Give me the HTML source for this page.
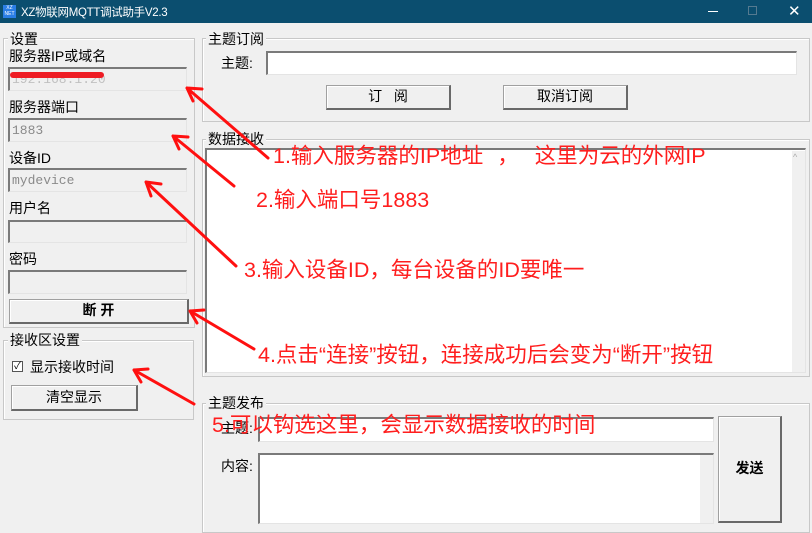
<!DOCTYPE html>
<html><head><meta charset="utf-8"><style>
*{box-sizing:border-box;margin:0;padding:0}
body{width:812px;height:531px;overflow:hidden;background:#f0f0f0;position:relative;font-family:"Liberation Sans","Noto Sans CJK SC",sans-serif;font-size:14px;color:#000}
.a{position:absolute}
.tb{left:0;top:0;width:812px;height:23px;background:#0b4e6f;color:#fff;font-size:12px}
.gb{position:absolute;border:1px solid #c8c8c8;box-shadow:inset 1px 1px 0 #fff}
.lg{position:absolute;background:#f0f0f0;padding:0 2px;font-size:14px;line-height:16px;color:#000}
.in{position:absolute;border-top:2px solid #7a7a7a;border-left:2px solid #7a7a7a;border-right:1px solid #e4e4e4;border-bottom:1px solid #e4e4e4;background:#f0f0f0;font-family:"Liberation Mono",monospace;font-size:13px;color:#8a8a8a;padding:3px 0 0 2px}
.w{background:#fff}
.bt{position:absolute;background:#f0f0f0;border:1px solid #a0a0a0;border-right:2px solid #696969;border-bottom:2px solid #696969;box-shadow:inset 1px 1px 0 #fff;text-align:center;font-size:14px}
.lb{position:absolute;font-size:14px;line-height:16px}
.r{position:absolute;color:#ff1e1e;font-size:21.5px;line-height:22px;white-space:nowrap}
</style></head><body>
<div class="a tb">
 <div class="a" style="left:3px;top:5px;width:13px;height:13px;background:#2a7ee6;color:#fff;font-size:5px;line-height:6px;text-align:center">XZ<br>NET</div>
 <div class="a" style="left:21px;top:4px;font-size:11.5px;letter-spacing:-0.3px">XZ物联网MQTT调试助手V2.3</div>
 <div class="a" style="left:708px;top:11px;width:10px;height:1px;background:#fff"></div>
 <div class="a" style="left:748px;top:6px;width:9px;height:9px;border:1px solid #557a90"></div>
 <div class="a" style="left:788px;top:2px;font-size:15px;color:#fff">✕</div>
</div>

<div class="gb" style="left:3px;top:38px;width:192px;height:290px"></div>
<div class="lg" style="left:8px;top:31px">设置</div>
<div class="lb" style="left:9px;top:48px">服务器IP或域名</div>
<div class="in" style="left:8px;top:67px;width:179px;height:24px;color:#c0c0c0">192.168.1.20</div>
<div class="a" style="left:10px;top:72px;width:94px;height:6px;background:#ee1c24;border-radius:3px"></div>
<div class="lb" style="left:9px;top:99px">服务器端口</div>
<div class="in" style="left:8px;top:118px;width:179px;height:24px">1883</div>
<div class="lb" style="left:9px;top:150px">设备ID</div>
<div class="in" style="left:8px;top:168px;width:179px;height:24px">mydevice</div>
<div class="lb" style="left:9px;top:200px">用户名</div>
<div class="in" style="left:8px;top:220px;width:179px;height:23px"></div>
<div class="lb" style="left:9px;top:251px">密码</div>
<div class="in" style="left:8px;top:270px;width:179px;height:24px"></div>
<div class="bt" style="left:9px;top:299px;width:180px;height:25px;line-height:21px;font-weight:bold">断 开</div>

<div class="gb" style="left:3px;top:340px;width:191px;height:80px"></div>
<div class="lg" style="left:8px;top:332px">接收区设置</div>
<div class="a" style="left:12px;top:361px;width:11px;height:11px;border:1px solid #555;background:#fff;font-size:10px;line-height:9px;text-align:center">✓</div>
<div class="lb" style="left:30px;top:359px">显示接收时间</div>
<div class="bt" style="left:11px;top:385px;width:127px;height:26px;line-height:22px">清空显示</div>

<div class="gb" style="left:202px;top:38px;width:608px;height:84px"></div>
<div class="lg" style="left:206px;top:31px">主题订阅</div>
<div class="lb" style="left:221px;top:55px">主题:</div>
<div class="in w" style="left:266px;top:51px;width:531px;height:24px"></div>
<div class="bt" style="left:326px;top:85px;width:125px;height:25px;line-height:21px">订&nbsp;&nbsp;&nbsp;阅</div>
<div class="bt" style="left:503px;top:85px;width:125px;height:25px;line-height:21px">取消订阅</div>

<div class="gb" style="left:202px;top:139px;width:608px;height:238px"></div>
<div class="lg" style="left:206px;top:131px">数据接收</div>
<div class="in w" style="left:205px;top:148px;width:601px;height:225px"></div>
<div class="a" style="left:792px;top:151px;width:13px;height:221px;background:#f0f0f0"></div>
<div class="a" style="left:793px;top:152px;font-size:9px;color:#aaa">^</div>

<div class="gb" style="left:202px;top:403px;width:608px;height:130px"></div>
<div class="lg" style="left:206px;top:395px">主题发布</div>
<div class="lb" style="left:221px;top:420px">主题:</div>
<div class="in w" style="left:258px;top:417px;width:456px;height:25px"></div>
<div class="lb" style="left:221px;top:458px">内容:</div>
<div class="in w" style="left:258px;top:453px;width:456px;height:71px"></div>
<div class="a" style="left:700px;top:455px;width:13px;height:68px;background:#f0f0f0"></div>
<div class="bt" style="left:718px;top:416px;width:64px;height:107px;line-height:103px;font-weight:bold">发送</div>

<div class="r" style="left:273px;top:145px">1.输入服务器的IP地址<span style="display:inline-block;width:14px"></span>，<span style="display:inline-block;width:16px"></span>这里为云的外网IP</div>
<div class="r" style="left:256px;top:189px">2.输入端口号1883</div>
<div class="r" style="left:244px;top:259px">3.输入设备ID，每台设备的ID要唯一</div>
<div class="r" style="left:258px;top:344px">4.点击“连接”按钮，连接成功后会变为“断开”按钮</div>
<div class="r" style="left:212px;top:414px">5.可以钩选这里，会显示数据接收的时间</div>
<svg class="a" style="left:0;top:0" width="812" height="531" fill="none" stroke="#ff1010" stroke-width="3" stroke-linecap="round">
<path d="M268 158L187 88M187 88L202 89M187 88L193 101"/>
<path d="M234 186L173 136M173 136L188 137M173 136L179 149"/>
<path d="M236 266L146 182M146 182L161 184M146 182L151 196"/>
<path d="M254 349L190 311M190 311L204 310M190 311L197 323"/>
<path d="M194 404L134 370M134 370L148 369M134 370L141 382"/>
</svg>
</body></html>
